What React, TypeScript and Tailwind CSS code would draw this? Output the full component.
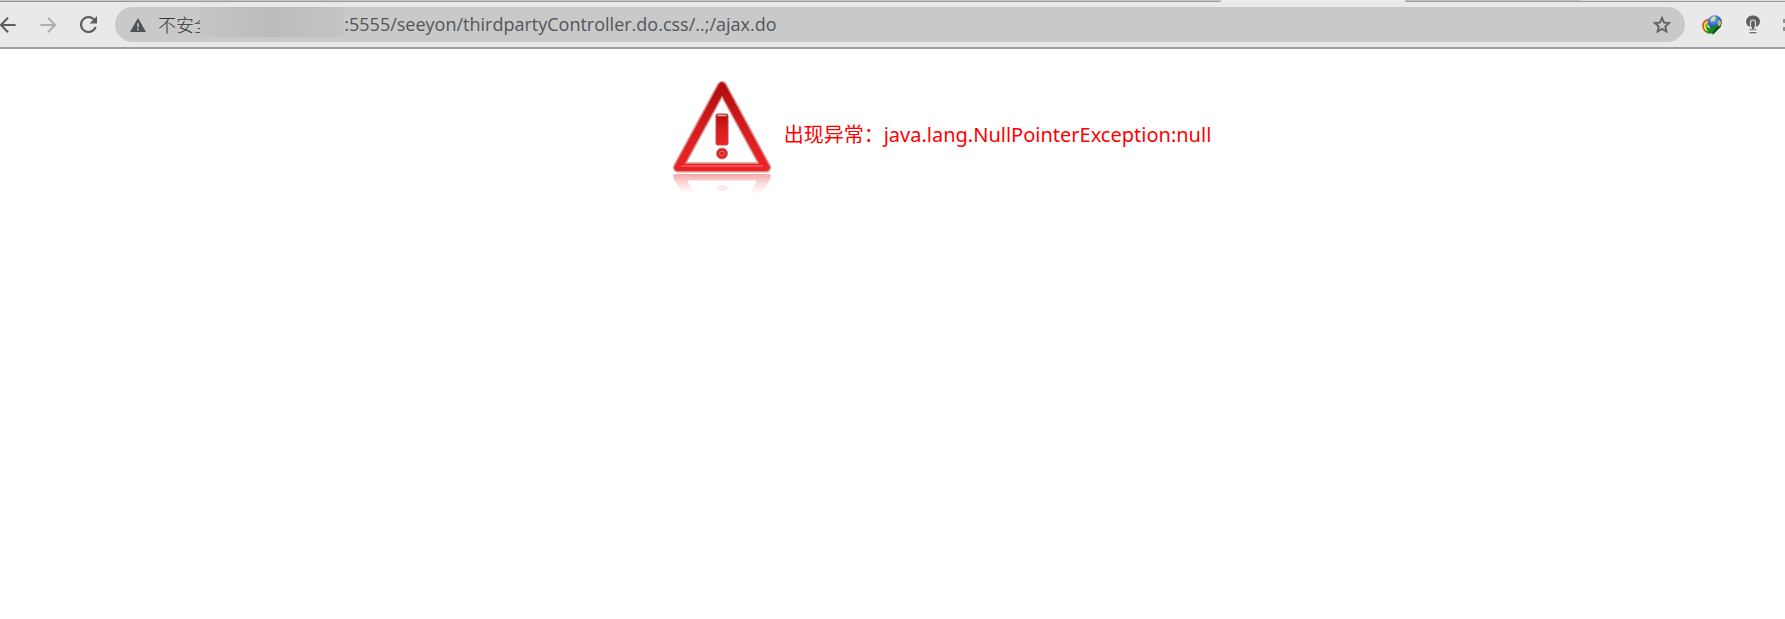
import { useState } from "react";

function TabStrip() {
  return (
    <div className="flex h-[2px] bg-[#ebebeb]" aria-hidden="true">
      <div className="grow rounded-br-[2px] border-b border-[#999999] bg-[#c6c6c6]" />
      <div className="w-[184px] shrink-0" />
      <div className="w-[176px] shrink-0 rounded-bl-[2px] border-b border-[#999999] bg-[#c3c3c3]" />
      <div className="w-[204px] shrink-0 border-b border-[#999999] bg-[#dddddd]" />
    </div>
  );
}

function BackIcon() {
  return (
    <svg viewBox="0 0 16 16" className="size-4" fill="none" stroke="currentColor" strokeWidth="2">
      <path d="M15.6 8H1.5M8 .8.9 8 8 15.2" />
    </svg>
  );
}

function ForwardIcon() {
  return (
    <svg viewBox="0 0 16 16" className="size-4" fill="none" stroke="currentColor" strokeWidth="2">
      <path d="M.4 8h14.1M8 .8 15.1 8 8 15.2" />
    </svg>
  );
}

function ReloadIcon() {
  return (
    <svg viewBox="4 4 16 16" className="size-[17px]" fill="currentColor">
      <path d="M17.65 6.35A7.96 7.96 0 0 0 12 4a8 8 0 1 0 7.73 10h-2.08A6 6 0 1 1 12 6c1.66 0 3.14.69 4.22 1.78L13 11h7V4z" />
    </svg>
  );
}

function WarningIcon() {
  return (
    <svg viewBox="0 0 16 14" className="h-[14px] w-4 shrink-0">
      <path d="M8 0 16 14H0z" fill="#4e5155" />
      <path d="M7.2 5.2h1.6v4H7.2zM7.2 10.6h1.6v1.6H7.2z" fill="#c9c9c9" />
    </svg>
  );
}

function StarIcon() {
  return (
    <svg viewBox="2 2 20 19" className="h-[17px] w-[18px]" fill="currentColor" stroke="currentColor" strokeWidth="0.4">
      <path d="m22 9.24-7.19-.62L12 2 9.19 8.63 2 9.24l5.46 4.73L5.82 21 12 17.27 18.18 21l-1.63-7.03zM12 15.4l-3.76 2.27 1-4.28-3.32-2.88 4.38-.38L12 6.1l1.71 4.04 4.38.38-3.32 2.88 1 4.28z" />
    </svg>
  );
}

function GlobeIcon() {
  return (
    <svg viewBox="0 0 20 20" className="size-5">
      <defs>
        <radialGradient id="globe" cx="0.4" cy="0.28" r="0.8">
          <stop offset="0" stopColor="#c4dcf8" />
          <stop offset="0.3" stopColor="#4f8ade" />
          <stop offset="1" stopColor="#0b3188" />
        </radialGradient>
      </defs>
      <g fill="none" strokeWidth="2">
        <path d="M8.500 5C4 4 .9 7.500 1.200 11.200c.3 3.300 3 6 7 6.600" stroke="#ec4a35" />
        <path d="M8.500 6.700C5 6.200 2.700 8.300 2.800 11.100c.2 2.800 2.500 5 6 5.500" stroke="#fbe02c" />
        <path d="M8.500 8.500C6 8 4.400 9 4.500 11.100c.1 2 1.900 3.700 4.900 4.200" stroke="#4fc43a" />
      </g>
      <circle cx="12.800" cy="7.300" r="7" fill="url(#globe)" />
      <path d="M10 2.200c2-1.200 3.500-.8 4 .1-.5 1.700-1.800 1.300-2.100 2.800-.8 1.400-1.900.8-2.900 1.800-.6-1.700-.3-3.400 1-4.700z" fill="#e3e088" />
      <path d="M16 5.500c1.300-.5 2.500.4 3.100 1.500-.1 1.800-.8 3.300-2 4.400-1.300-.9-2.200-4-1.100-5.900z" fill="#c9bd4a" />
      <path d="M1.800 14.500c2 3.400 5.500 4.500 8.700 3.700l.2 1.600 8.500-8.500-8.300-.9.100 2.200c-2.400 1-4.700.6-6.100-1-.5 1.800.2 3.600 1.700 4.700-1.800-.1-3.500-.6-4.800-1.800z" fill="#128a1b" />
      <path d="m10.700 19.800 8.500-8.500-4.500 1-3.700 5z" fill="#07480d" />
    </svg>
  );
}

function BulbIcon() {
  return (
    <svg viewBox="0 0 18 22" className="h-[22px] w-[18px]">
      <path d="M9 2c-4 0-7 2.600-7 6 0 2.600 1.500 4.600 3.700 5.600v5.200h6.600v-5.200C14.500 12.600 16 10.600 16 8c0-3.400-3-6-7-6z" fill="#f4f4f4" stroke="#f4f4f4" strokeWidth="2" />
      <path d="M9 1.500c-4 0-7 2.600-7 6 0 2.600 1.600 4.600 4 5.500h6c2.400-.9 4-2.900 4-5.500 0-3.400-3-6-7-6z" fill="#606060" />
      <path d="M6.500 13V8.500a2.500 2.500 0 0 1 5 0V13" fill="none" stroke="#dddddd" strokeWidth="1.200" />
      <path d="M5.500 18.700h7" stroke="#666666" strokeWidth="1.300" />
      <path d="M5.500 15.500h7" stroke="#a8a8a8" strokeWidth="2.500" />
      <path d="M9 8v7" stroke="#606060" strokeWidth="2" />
    </svg>
  );
}

function AlertSign() {
  return (
    <svg viewBox="0 0 100 120" className="h-[120px] w-[100px] shrink-0" role="img" aria-label="警告">
      <defs>
        <linearGradient id="frame" x1="0" y1="0" x2="0" y2="1">
          <stop offset="0" stopColor="#b10d0d" />
          <stop offset="0.5" stopColor="#d51c1c" />
          <stop offset="1" stopColor="#ee2226" />
        </linearGradient>
        <linearGradient id="mirror" x1="0" y1="0" x2="0" y2="1">
          <stop offset="0" stopColor="#f08888" stopOpacity="0.75" />
          <stop offset="1" stopColor="#f8c4c4" stopOpacity="0" />
        </linearGradient>
      </defs>
      <path d="M50 8 94 89.500H6z" fill="#c99292" stroke="#c99292" strokeWidth="10" strokeLinejoin="round" />
      <path d="M50 8 94 89.500H6z" fill="#e98a8a" stroke="#e98a8a" strokeWidth="8.500" strokeLinejoin="round" />
      <path d="M50 8 94 89.500H6z" fill="url(#frame)" stroke="url(#frame)" strokeWidth="7" strokeLinejoin="round" />
      <path d="M9 88h82" stroke="#f47c7c" strokeWidth="1" />
      <path d="M50 19 86 85H14z" fill="#ffffff" stroke="#d99a9a" strokeWidth="1.500" />
      <rect x="44" y="36" width="12" height="31" rx="1.500" fill="url(#frame)" stroke="#c04a4a" />
      <path d="M45.500 37.500h9" stroke="#f4b0b0" strokeWidth="1.500" />
      <circle cx="50" cy="75.500" r="5.500" fill="#dd2020" stroke="#d07a7a" />
      <circle cx="50" cy="75.500" r="2.500" fill="none" stroke="#f06a6a" />
      <path d="M1 97.500q0-1.500 3-1.500h92q3 0 3 1.500l-1 4-9 15H77l8-14H15l8 14H11l-9-15z" fill="url(#mirror)" />
      <ellipse cx="50" cy="110" rx="6" ry="3" fill="#fdeaea" />
    </svg>
  );
}

function Toolbar() {
  const [address, setAddress] = useState("8:5555/seeyon/thirdpartyController.do.css/..;/ajax.do");

  return (
    <header className="flex h-[47px] items-center overflow-hidden border-b-2 border-[#9f9d9e] bg-[#e9e9e9] text-[#5a5d61]">
      <nav className="flex shrink-0 items-center gap-6">
        <button type="button" aria-label="后退"><BackIcon /></button>
        <button type="button" aria-label="前进" className="text-[#adafb1]"><ForwardIcon /></button>
        <button type="button" aria-label="重新加载"><ReloadIcon /></button>
      </nav>
      <div className="ml-[18px] flex h-[35px] min-w-0 grow items-center rounded-full bg-[#c9c9c9] pr-[14px] pl-[15px]">
        <button type="button" className="flex shrink-0 items-center gap-3 text-lg leading-6 font-light whitespace-nowrap text-[#33363a]">
          <WarningIcon />
          不安全
        </button>
        <div className="relative z-10 -mr-2.5 mb-[5px] -ml-3 h-[30px] w-36 shrink-0 bg-linear-to-r from-[#c4c4c4] via-[#bcbcbc] to-[#c3c3c3]" />
        <input
          type="text"
          aria-label="地址"
          value={address}
          onChange={(event) => setAddress(event.target.value)}
          className="min-w-0 grow bg-transparent pb-0.5 text-lg leading-6 text-[#525559] outline-none"
        />
        <button type="button" aria-label="收藏" className="shrink-0"><StarIcon /></button>
      </div>
      <div className="flex w-[100px] shrink-0 items-center overflow-hidden pl-[17px]">
        <button type="button" aria-label="下载" className="shrink-0"><GlobeIcon /></button>
        <button type="button" aria-label="提示" className="ml-[22px] shrink-0"><BulbIcon /></button>
        <button type="button" aria-label="扩展程序" className="ml-[21px] flex shrink-0 flex-col gap-1">
          <span className="h-1 w-3 bg-[#909090]" />
          <span className="h-1 w-3 bg-[#909090]" />
        </button>
      </div>
    </header>
  );
}

export default function App() {
  return (
    <div className="min-h-screen bg-white font-['Open_Sans','Noto_Sans_CJK_SC',sans-serif]">
      <TabStrip />
      <Toolbar />
      <main className="flex items-center justify-center gap-3 pt-[29px] pl-[98px] text-xl text-[#ff0000]">
        <AlertSign />
        <p className="pb-1.5 font-['Noto_Sans','Noto_Sans_CJK_SC',sans-serif] leading-7">
          出现异常：java.lang.NullPointerException:null
        </p>
      </main>
    </div>
  );
}
